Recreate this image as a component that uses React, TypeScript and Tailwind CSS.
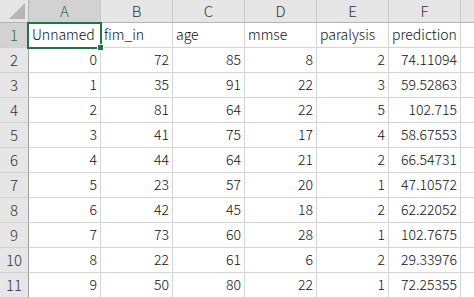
const columns = ['A', 'B', 'C', 'D', 'E', 'F'];
const headers = ['Unnamed', 'fim_in', 'age', 'mmse', 'paralysis', 'prediction'];

const rows: (number | string)[][] = [
  [0, 72, 85, 8, 2, '74.11094'],
  [1, 35, 91, 22, 3, '59.52863'],
  [2, 81, 64, 22, 5, '102.715'],
  [3, 41, 75, 17, 4, '58.67553'],
  [4, 44, 64, 21, 2, '66.54731'],
  [5, 23, 57, 20, 1, '47.10572'],
  [6, 42, 45, 18, 2, '62.22052'],
  [7, 73, 60, 28, 1, '102.7675'],
  [8, 22, 61, 6, 2, '29.33976'],
  [9, 50, 80, 22, 1, '72.25355'],
];

const font = { fontFamily: '"Noto Sans CJK JP", "Noto Sans", sans-serif' };

function RowHeader({ n, active }: { n: number; active?: boolean }) {
  return (
    <div
      className={`flex w-[29px] shrink-0 items-center justify-center border-r border-b border-r-[#9f9f9f] border-b-[#d0d0d0] text-[15px] ${
        active ? 'bg-[#d2d2d2] text-[#217346]' : 'bg-[#e6e6e6] text-[#333]'
      }`}
    >
      {n}
    </div>
  );
}

export default function App() {
  return (
    <div className="relative h-[298px] w-[474px] overflow-hidden bg-white font-light text-[#111]" style={font}>
      {/* column headers */}
      <div className="flex h-[23px] border-b border-[#b4b4b4] bg-[#e6e6e6]">
        <div className="relative w-[29px] shrink-0 border-r border-[#b4b4b4]">
          <svg className="absolute right-[3px] bottom-[3px]" width="16" height="16" viewBox="0 0 16 16">
            <polygon points="16,0 16,16 0,16" fill="#b5b5b5" />
          </svg>
        </div>
        {columns.map((c, i) => (
          <div
            key={c}
            className={`flex w-[72px] shrink-0 items-center justify-center border-r border-[#c6c6c6] text-[15px] ${
              i === 0 ? 'bg-[#d2d2d2] text-[#217346]' : 'text-[#333]'
            }`}
          >
            {c}
          </div>
        ))}
        <div className="flex-1" />
      </div>

      {/* header row 1 */}
      <div className="flex h-[25px]">
        <RowHeader n={1} active />
        {headers.map(h => (
          <div
            key={h}
            className="flex w-[72px] shrink-0 items-end overflow-visible whitespace-nowrap border-r border-b border-[#d4d4d4] pb-[4px] pl-[3px] text-[14px] leading-[17px]"
          >
            {h}
          </div>
        ))}
        <div className="flex-1 border-b border-[#d4d4d4]" />
      </div>

      {rows.map((r, ri) => (
        <div key={ri} className="flex h-[25px]">
          <RowHeader n={ri + 2} />
          {r.map((v, ci) => (
            <div
              key={ci}
              className="flex w-[72px] shrink-0 items-end justify-end border-r border-b border-[#d4d4d4] pr-[3px] pb-[4px] text-[14px] leading-[17px]"
            >
              {v}
            </div>
          ))}
          <div className="flex-1 border-b border-[#d4d4d4]" />
        </div>
      ))}

      {/* selection */}
      <div className="absolute top-[22px] left-[27px] h-[27px] w-[75px] border-2 border-[#217346]" />
      <div className="absolute top-[44px] left-[97px] h-[7px] w-[7px] border border-white bg-[#217346]" />
    </div>
  );
}
